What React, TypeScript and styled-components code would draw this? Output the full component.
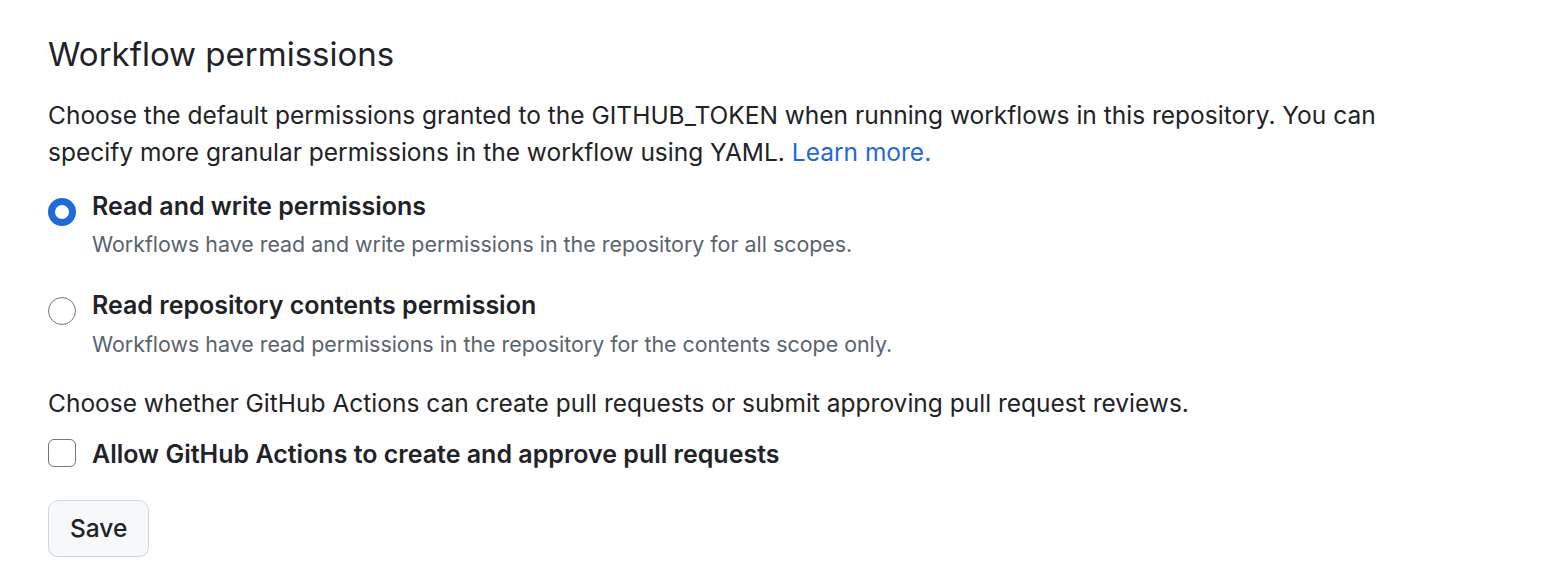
import styled, { createGlobalStyle } from "styled-components";

const GlobalStyle = createGlobalStyle`
  body {
    margin: 0;
    background: #ffffff;
    color: #1f2328;
    font-family: Inter, "Noto Sans", "Liberation Sans", sans-serif;
    -webkit-font-smoothing: antialiased;
  }
`;

const Page = styled.div`
  padding: 28px 0 0 48px;
`;

const Heading = styled.h2`
  margin: 0;
  font-size: 33px;
  font-weight: 400;
  line-height: 52px;
  color: #1f2328;
`;

const Text = styled.p`
  margin: 17px 0 0;
  max-width: 1340px;
  font-size: 24.5px;
  line-height: 1.5;
  color: #1f2328;
`;

const Link = styled.a`
  color: #1f6ad8;
  text-decoration: none;
`;

const Options = styled.div`
  display: flex;
  flex-direction: column;
  gap: 26px;
  margin-top: 17px;
`;

const Option = styled.label`
  display: flex;
  align-items: flex-start;
  gap: 16px;
  cursor: pointer;
`;

const Radio = styled.span<{ $checked?: boolean }>`
  flex: none;
  box-sizing: border-box;
  width: 28px;
  height: 28px;
  margin-top: 10px;
  border-radius: 50%;
  background: #ffffff;
  border: ${(p) => (p.$checked ? "7px solid #1f6ad8" : "1.5px solid #6e7781")};
`;

const Box = styled.span`
  flex: none;
  box-sizing: border-box;
  width: 28px;
  height: 28px;
  margin-top: 3px;
  border-radius: 6px;
  background: #ffffff;
  border: 1.5px solid #6e7781;
`;

const OptionBody = styled.div`
  display: flex;
  flex-direction: column;
  gap: 5px;
`;

const OptionLabel = styled.span`
  font-size: 25px;
  font-weight: 600;
  line-height: 36.75px;
  color: #1f2328;
`;

const OptionHint = styled.span`
  font-size: 21.4px;
  line-height: 31.5px;
  color: #59636e;
`;

const Prompt = styled(Text)`
  margin-top: 25px;
`;

const CheckRow = styled(Option)`
  margin-top: 14px;
`;

const SaveButton = styled.button`
  display: block;
  margin-top: 27px;
  height: 57px;
  padding: 0 21px;
  border: 1.5px solid #d1d9e0;
  border-radius: 10px;
  background: #f6f8fa;
  box-shadow: 0 1px 0 rgba(31, 35, 40, 0.04);
  font-family: inherit;
  font-size: 24.5px;
  font-weight: 500;
  color: #1f2328;
  cursor: pointer;
`;

export default function App() {
  return (
    <>
      <GlobalStyle />
      <Page>
        <Heading>Workflow permissions</Heading>
        <Text>
          Choose the default permissions granted to the GITHUB_TOKEN when running workflows in this
          repository. You can specify more granular permissions in the workflow using YAML.{" "}
          <Link href="#">Learn more.</Link>
        </Text>

        <Options>
          <Option>
            <Radio $checked />
            <OptionBody>
              <OptionLabel>Read and write permissions</OptionLabel>
              <OptionHint>Workflows have read and write permissions in the repository for all scopes.</OptionHint>
            </OptionBody>
          </Option>
          <Option>
            <Radio />
            <OptionBody>
              <OptionLabel>Read repository contents permission</OptionLabel>
              <OptionHint>Workflows have read permissions in the repository for the contents scope only.</OptionHint>
            </OptionBody>
          </Option>
        </Options>

        <Prompt>
          Choose whether GitHub Actions can create pull requests or submit approving pull request reviews.
        </Prompt>
        <CheckRow>
          <Box />
          <OptionLabel>Allow GitHub Actions to create and approve pull requests</OptionLabel>
        </CheckRow>

        <SaveButton>Save</SaveButton>
      </Page>
    </>
  );
}
